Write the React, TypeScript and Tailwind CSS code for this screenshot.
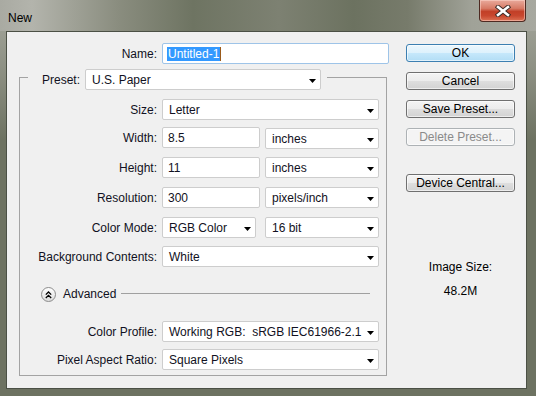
import React from "react";

const Arrow = () => (
  <svg width="7" height="4" viewBox="0 0 7 4" className="mt-[2px] shrink-0">
    <polygon points="0,0 7,0 3.5,4" fill="#000" />
  </svg>
);

function Select({ value, className = "" }: { value: string; className?: string }) {
  return (
    <div
      className={`h-[21px] flex items-center justify-between bg-white border border-[#cdcdcd] rounded-[2px] pl-[6px] pr-[4px] ${className}`}
    >
      <span className="whitespace-pre">{value}</span>
      <Arrow />
    </div>
  );
}

function Field({ value, className = "" }: { value: string; className?: string }) {
  return (
    <div
      className={`h-[21px] flex items-center bg-white border border-[#cdcdcd] rounded-[2px] pl-[5px] ${className}`}
    >
      <span className="whitespace-nowrap">{value}</span>
    </div>
  );
}

function Row({ label, mt, children }: { label: string; mt: string; children: React.ReactNode }) {
  return (
    <div className={`flex items-center h-[21px] ${mt}`}>
      <span className="w-[137px] text-right whitespace-nowrap">{label}</span>
      <div className="ml-[5px] flex items-center">{children}</div>
    </div>
  );
}

function Button({ label, kind = "normal", mt }: { label: string; kind?: "default" | "normal" | "disabled"; mt: string }) {
  const styles = {
    default:
      "border-[#3c7fb1] bg-[linear-gradient(to_bottom,#ecf7fd_0%,#ddf1fc_50%,#c6e8fb_50%,#b2ddf5_100%)] text-black",
    normal:
      "border-[#707070] bg-[linear-gradient(to_bottom,#f4f4f4_0%,#ececec_50%,#dfdfdf_50%,#d3d3d3_100%)] text-black",
    disabled: "border-[#adb2b5] bg-[#f4f4f4] text-[#8a8a8a]",
  };
  return (
    <div
      className={`h-[18px] w-[109px] border rounded-[3px] flex items-center justify-center leading-[16px] shadow-[inset_0_0_0_1px_rgba(255,255,255,0.6)] whitespace-nowrap ${styles[kind]} ${mt}`}
    >
      {label}
    </div>
  );
}

export default function App() {
  return (
    <div className="w-[536px] h-[396px] flex flex-col bg-[linear-gradient(to_bottom,#a7a99f_0px,#8d9083_70px,#6d7261_140px,#6d7261_100%)] font-['Liberation_Sans',Arial,sans-serif] text-[12px] text-[#111122] overflow-hidden">
      {/* Title bar */}
      <div className="h-[31px] flex justify-between bg-[linear-gradient(to_right,#a9aaa2_0%,#b3b4ac_6%,#8a8d7f_22%,#6e7462_36%,#7d8172_52%,#6c7260_66%,#777b6b_76%,#a0a298_88%,#a7a89f_100%)]">
        <span className="pl-[8px] pt-[11px] leading-[14px] text-black">New</span>
        <div className="mr-[10px] w-[47px] h-[22px] rounded-b-[4px] border border-t-0 border-[#4e2a22] bg-[linear-gradient(to_bottom,#e9aa9c_0%,#d77a65_40%,#c23f27_55%,#c8472e_75%,#dc7255_100%)] flex items-center justify-center shadow-[inset_0_0_0_1px_rgba(255,220,210,0.5)]">
          <svg width="16" height="12" viewBox="0 0 16 12">
            <path d="M3 2 L13 10 M13 2 L3 10" stroke="#3a2a26" strokeWidth="4.4" strokeLinecap="square" />
            <path d="M3 2 L13 10 M13 2 L3 10" stroke="#ffffff" strokeWidth="2.6" strokeLinecap="square" />
          </svg>
        </div>
      </div>

      {/* Client area */}
      <div className="flex-1 pl-[6px] pr-[9px] pb-[7px] flex">
        <div className="flex-1 border border-[#4b5045] bg-[#f0f0f0] flex">
          {/* Left panel */}
          <div className="w-[383px] flex flex-col">
            <div className="flex items-center h-[21px] mt-[11px]">
              <span className="w-[150px] text-right">Name:</span>
              <div className="ml-[5px] w-[227px] h-[21px] flex items-center bg-white border border-[#9ec4e8] rounded-[2px] pl-[4px]">
                <span className="bg-[#3399ff] text-white h-[14px] leading-[14px] pl-[1px] pr-[1px] whitespace-nowrap">
                  Untitled-1
                </span>
                <span className="w-px h-[14px] bg-[#9a5a1a]" />
              </div>
            </div>

            {/* Preset group box */}
            <div className="ml-[12px] w-[368px] flex flex-col">
              <div className="flex items-start h-[26px]">
                <div className="w-[9px] h-[13px] mt-[13px] border-t border-l border-[#a3a3a3]" />
                <div className="flex items-center pt-[5px] pl-[14px] pr-[6px]">
                  <span className="w-[38px] text-right whitespace-nowrap">Preset:</span>
                  <Select value="U.S. Paper" className="ml-[5px] w-[236px]" />
                </div>
                <div className="flex-1 h-[13px] mt-[13px] border-t border-r border-[#a3a3a3]" />
              </div>

              <div className="border-l border-r border-b border-[#a3a3a3] pb-[5px]">
                <Row label="Size:" mt="mt-[9px]">
                  <Select value="Letter" className="w-[217px]" />
                </Row>
                <Row label="Width:" mt="mt-[7px]">
                  <Field value="8.5" className="w-[98px]" />
                  <Select value="inches" className="ml-[5px] w-[114px] mt-[2px]" />
                </Row>
                <Row label="Height:" mt="mt-[9px]">
                  <Field value="11" className="w-[98px]" />
                  <Select value="inches" className="ml-[5px] w-[114px]" />
                </Row>
                <Row label="Resolution:" mt="mt-[9px]">
                  <Field value="300" className="w-[98px]" />
                  <Select value="pixels/inch" className="ml-[5px] w-[114px]" />
                </Row>
                <Row label="Color Mode:" mt="mt-[9px]">
                  <Select value="RGB Color" className="w-[94px]" />
                  <Select value="16 bit" className="ml-[9px] w-[114px]" />
                </Row>
                <Row label="Background Contents:" mt="mt-[8px]">
                  <Select value="White" className="w-[217px]" />
                </Row>

                {/* Advanced toggle */}
                <div className="flex items-start h-[15px] mt-[20px] ml-[21px] mr-[16px]">
                  <div className="w-[15px] h-[15px] rounded-full border border-[#8c8c8c] bg-[linear-gradient(to_bottom,#ffffff,#dcdcdc)] flex items-center justify-center shrink-0">
                    <svg width="7" height="8" viewBox="0 0 7 8">
                      <path d="M0.8 3.6 L3.5 1 L6.2 3.6 M0.8 7 L3.5 4.4 L6.2 7" stroke="#000" strokeWidth="1.3" fill="none" />
                    </svg>
                  </div>
                  <span className="ml-[7px] leading-[15px] whitespace-nowrap">Advanced</span>
                  <div className="flex-1 h-px bg-[#a0a0a0] ml-[5px] mt-[6px]" />
                </div>

                <Row label="Color Profile:" mt="mt-[19px]">
                  <Select value="Working RGB:  sRGB IEC61966-2.1" className="w-[217px]" />
                </Row>
                <Row label="Pixel Aspect Ratio:" mt="mt-[7px]">
                  <Select value="Square Pixels" className="w-[217px]" />
                </Row>
              </div>
            </div>
          </div>

          {/* Right column */}
          <div className="ml-[16px] w-[109px] flex flex-col items-center pt-[12px]">
            <Button label="OK" kind="default" mt="" />
            <Button label="Cancel" mt="mt-[10px]" />
            <Button label="Save Preset..." mt="mt-[10px]" />
            <Button label="Delete Preset..." kind="disabled" mt="mt-[10px]" />
            <Button label="Device Central..." mt="mt-[28px]" />
            <span className="mt-[68px] leading-[14px] text-black whitespace-nowrap">Image Size:</span>
            <span className="mt-[10px] leading-[14px] text-black whitespace-nowrap">48.2M</span>
          </div>
        </div>
      </div>
    </div>
  );
}
